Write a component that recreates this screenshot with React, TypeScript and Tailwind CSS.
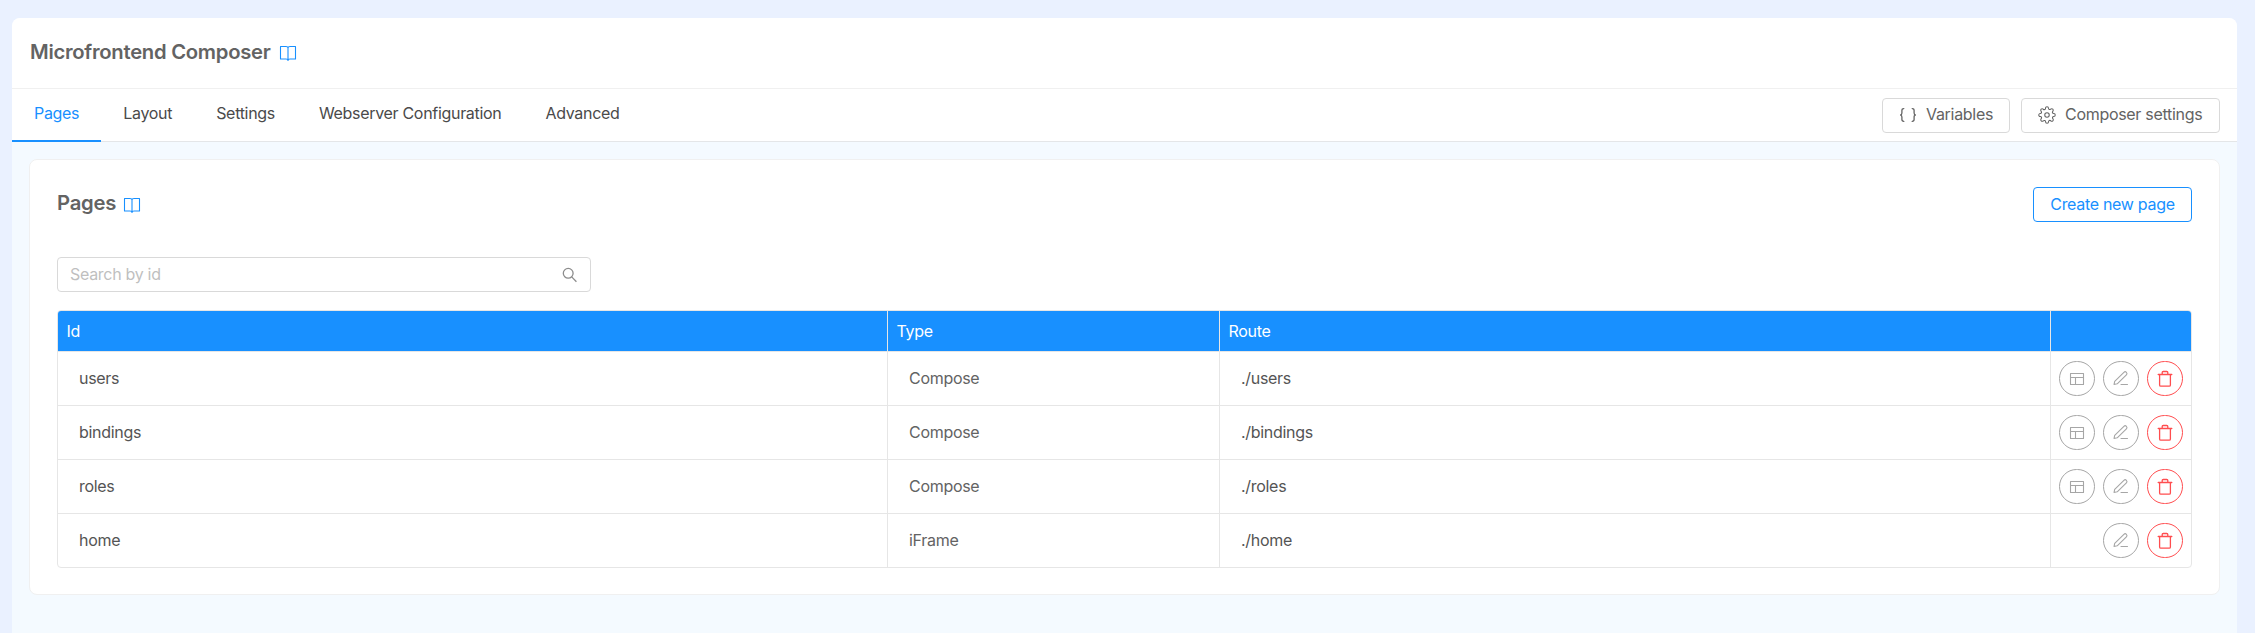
import React from "react";
import { FiSettings } from "react-icons/fi";

function Book() {
  return (
    <svg width="18" height="18" viewBox="0 0 18 18" fill="none" stroke="#1890ff" strokeWidth="1.1" strokeLinejoin="round" strokeLinecap="round">
      <path d="M9 16.500c0-1-.8-1.500-2-1.500H1.500V2.500H7c1.200 0 2 .6 2 1.500zM9 16.500c0-1 .8-1.500 2-1.500h5.500V2.500H11c-1.200 0-2 .6-2 1.500" />
    </svg>
  );
}

function Braces() {
  return (
    <svg width="18" height="18" viewBox="0 0 18 18" fill="none" stroke="currentColor" strokeWidth="1.3" strokeLinecap="round">
      <path d="M4.800 2.600C3.400 2.600 2.900 3.300 2.900 4.400v2.700C2.900 8.300 2.300 9 1.200 9c1.100 0 1.700.7 1.700 1.900v2.700c0 1.100.5 1.800 1.900 1.800M13.200 2.600c1.400 0 1.900.7 1.900 1.800v2.700c0 1.200.6 1.900 1.700 1.900-1.100 0-1.700.7-1.700 1.900v2.700c0 1.100-.5 1.800-1.900 1.800" />
    </svg>
  );
}

function Search() {
  return (
    <svg width="16" height="16" viewBox="0 0 16 16" fill="none" stroke="#8c8c8c" strokeWidth="1.3">
      <circle cx="6.200" cy="6.300" r="4.900" />
      <path d="M9.700 9.900l4.700 4.900" />
    </svg>
  );
}

function LayoutIcon() {
  return (
    <svg width="18" height="17" viewBox="0 0 18 17" fill="none" stroke="currentColor" strokeWidth="1.1" strokeLinejoin="round">
      <path d="M2.500 3.500h13v11h-13zM2.500 7.500h13M7.500 7.500v7" />
    </svg>
  );
}

function Pen() {
  return (
    <svg width="18" height="17" viewBox="0 0 18 17" fill="none" stroke="currentColor" strokeWidth="1.1" strokeLinecap="round" strokeLinejoin="round">
      <path d="M2 14.500l.7-3.200 9.200-9a1.750 1.750 0 0 1 2.500 2.500l-9.200 9zM9 14.500h6.500" />
    </svg>
  );
}

function Trash() {
  return (
    <svg width="18" height="17" viewBox="0 0 18 17" fill="none" stroke="currentColor" strokeWidth="1.3" strokeLinecap="round" strokeLinejoin="round">
      <path d="M2.200 4.500h13.600M6.200 4.500V2.500q0-1 1-1h3.600q1 0 1 1v2M3.600 4.500v10.500q0 1.200 1.200 1.200h8.400q1.200 0 1.200-1.200V4.500" />
    </svg>
  );
}

const tabs = ["Pages", "Layout", "Settings", "Webserver Configuration", "Advanced"];
const rows = [
  ["users", "Compose", "./users"],
  ["bindings", "Compose", "./bindings"],
  ["roles", "Compose", "./roles"],
  ["home", "iFrame", "./home"],
];
const cols = "grid grid-cols-[830px_332px_831px_140px]";
const circle = "flex h-[35px] w-9 items-center justify-center rounded-full border bg-white";
const button = "flex h-[35px] items-center rounded border bg-white";
const cell = "flex items-center border-r border-[#e6e6e6] pb-0.5 pl-[21px]";

export default function App() {
  return (
    <div className="h-[633px] overflow-hidden bg-[#eaf1ff] pt-[18px] pr-[18px] pl-3 font-[Inter,sans-serif] text-[16px] tracking-[-0.3px] text-[#636363]">
      <div className="flex h-full flex-col overflow-hidden rounded-t-lg bg-[#f4faff]">
        <header className="flex h-[71px] items-center border-b border-[#f0f0f0] bg-white pl-[18px]">
          <h1 className="pb-0.5 text-[20.25px] font-semibold tracking-[-0.27px]">Microfrontend Composer</h1>
          <span className="ml-2"><Book /></span>
        </header>
        <nav className="flex h-[53px] justify-between border-b border-[#e4e6e8] bg-white pr-[17px]">
          <div className="flex h-[53px] tracking-[-0.31px] text-[#4a4a4a]">
            {tabs.map((t, i) => (
              <div key={t} className={i === 0 ? "flex items-center border-b-2 border-[#1890ff] px-[22px] pb-[3px] text-[#1890ff]" : "flex items-center border-b-2 border-transparent px-[22px] pb-[3px]"}>{t}</div>
            ))}
          </div>
          <div className="flex items-center gap-[11px]">
            <button className={`${button} w-[128px] gap-[9px] border-[#d9d9d9] pl-4`}><Braces /><span className="pb-0.5">Variables</span></button>
            <button className={`${button} w-[199px] gap-[9px] border-[#d9d9d9] pl-4`}><FiSettings size={18} strokeWidth={1.4} /><span className="pb-0.5">Composer settings</span></button>
          </div>
        </nav>
        <main className="mt-[17px] mr-[17px] ml-[17px] h-[436px] rounded-lg border border-[#f0f0f0] bg-white px-[27px] pt-[27px]">
          <div className="flex h-[35px] items-center justify-between">
            <div className="flex items-center">
              <h2 className="pb-[3px] text-[20.25px] font-semibold tracking-[-0.25px]">Pages</h2>
              <span className="ml-[7px]"><Book /></span>
            </div>
            <button className={`${button} w-[159px] justify-center border-[#1890ff] pb-0.5 text-[#1890ff]`}>Create new page</button>
          </div>
          <div className="mt-[35px] flex h-[35px] w-[534px] items-center justify-between rounded border border-[#d9d9d9] px-3">
            <span className="pb-0.5 text-[#bfbfbf]">Search by id</span>
            <Search />
          </div>
          <div className="mt-[18px] overflow-hidden rounded border border-[#e6e6e6]">
            <div className={`${cols} h-[41px] border-b border-[#e6e6e6] bg-[#1890ff] text-white`}>
              {["Id", "Type", "Route", ""].map((h, i) => (
                <div key={i} className={i < 3 ? "flex items-center border-r border-[#e6e6e6] pb-px pl-[8.5px]" : ""}>{h}</div>
              ))}
            </div>
            {rows.map((r, i) => (
              <div key={r[0]} className={i < 3 ? `${cols} h-[54px] border-b border-[#e6e6e6]` : `${cols} h-[53px]`}>
                {r.map((c, j) => (
                  <div key={j} className={j === 1 ? cell : `${cell} text-[#545454]`}>{c}</div>
                ))}
                <div className="flex items-center justify-end gap-2 pr-2">
                  {i < 3 && <span className={`${circle} border-[#a6a6a6] text-[#a6a6a6]`}><LayoutIcon /></span>}
                  <span className={`${circle} border-[#a6a6a6] text-[#a6a6a6]`}><Pen /></span>
                  <span className={`${circle} border-[#ff4d4f] text-[#ff4d4f]`}><Trash /></span>
                </div>
              </div>
            ))}
          </div>
        </main>
      </div>
    </div>
  );
}
